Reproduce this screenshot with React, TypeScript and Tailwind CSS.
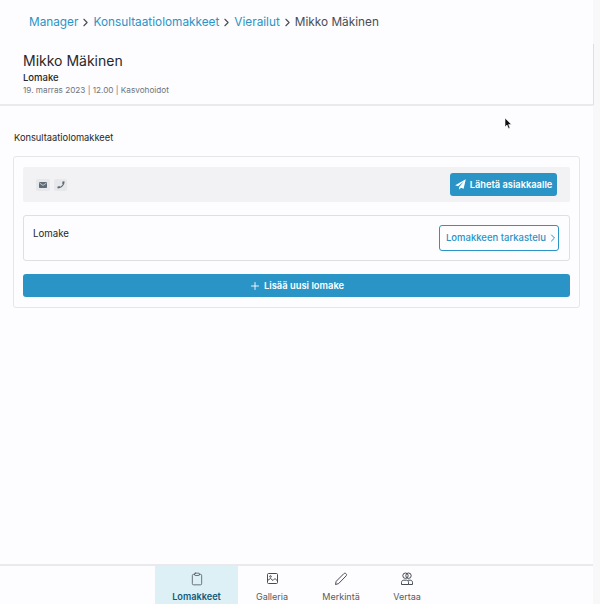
import { ChevronRight, Plus, Clipboard } from "lucide-react";

function Crumb({ children, last }: { children: string; last?: boolean }) {
  return (
    <>
      <span className={last ? "text-[#474d55]" : "text-[#2a94c6]"}>{children}</span>
      {!last && <ChevronRight className="w-[13px] h-[13px] mx-[1px] text-[#474d55]" strokeWidth={2} />}
    </>
  );
}

function Tab({ label, active, icon, w }: { label: string; active?: boolean; icon: React.ReactNode; w: string }) {
  return (
    <div className={`${w} h-full flex flex-col items-center text-[#474d55] ${active ? "bg-[#ddf0f5]" : ""}`}>
      <div className="h-[15px] mt-[5px] flex items-center">{icon}</div>
      <span className={active ? "mt-[5px] text-[9.2px] leading-[12px] font-semibold text-[#155a78]" : "mt-[5px] text-[9px] leading-[12px] text-[#555b63]"}>{label}</span>
    </div>
  );
}

export default function App() {
  return (
    <div className="relative w-[600px] h-[604px] overflow-hidden bg-[#fdfcfe] flex flex-col font-['Inter',sans-serif] text-[#25282c]">
      <div className="absolute right-0 top-0 bottom-0 w-[7px] bg-[#f8f8f9]" />
      <div className="absolute left-[593px] top-[44px] h-[61px] w-px bg-[#dfdfe2]" />

      <nav className="h-[44px] pl-[29px] pt-[1px] flex items-center text-[11.8px] leading-none">
        <Crumb>Manager</Crumb>
        <Crumb>Konsultaatiolomakkeet</Crumb>
        <Crumb>Vierailut</Crumb>
        <Crumb last>Mikko Mäkinen</Crumb>
      </nav>

      <header className="h-[62px] w-[593px] border-b-2 border-[#eaeaec] pl-[23px] pt-[7px]">
        <h1 className="text-[14px] leading-[20px] font-normal">Mikko Mäkinen</h1>
        <p className="mt-[1px] text-[9.5px] leading-[12px] font-medium">Lomake</p>
        <p className="text-[8.2px] leading-[13px] text-[#6f747b]">19. marras 2023 | 12.00 | Kasvohoidot</p>
      </header>

      <main className="pl-[13px] w-[594px] pr-[14px]">
        <h2 className="mt-[24px] pl-[1px] text-[9.3px] leading-[16px] font-normal">Konsultaatiolomakkeet</h2>
        <section className="mt-[10px] h-[152px] border border-[#e6e6e9] rounded-[3px] px-[9px] pt-[10px]">
          <div className="h-[35px] bg-[#f2f2f4] rounded-[2px] pl-[13px] pr-[13px] flex items-center justify-between">
            <div className="flex gap-[4px]">
              <span className="w-[14px] h-[12px] rounded-[2px] bg-[#e7e8ea] flex items-center justify-center">
                <svg width="8" height="6" viewBox="0 0 8 6">
                  <rect width="8" height="6" rx="0.8" fill="#5e6c78" />
                  <path d="M0.5 1L4 3.4L7.5 1" fill="none" stroke="#e7e8ea" strokeWidth="0.7" />
                </svg>
              </span>
              <span className="w-[13px] h-[12px] rounded-[2px] bg-[#e7e8ea] flex items-center justify-center">
                <svg width="8" height="8" viewBox="0 0 8 8">
                  <path d="M7.6 0.6L5.8 0.2L5 2.2L5.9 2.9C5.4 4 4.3 5.1 3 5.8L2.3 4.9L0.3 5.7L0.7 7.5C4.4 7.6 7.6 4.4 7.6 0.6Z" fill="#5e6c78" />
                </svg>
              </span>
            </div>
            <button className="w-[107px] h-[23px] bg-[#2a94c6] rounded-[3px] flex items-center justify-center gap-[4px] text-white text-[9.3px] font-semibold whitespace-nowrap">
              <svg width="11" height="11" viewBox="0 0 11 11">
                <path d="M10.8 0.2L0.2 6.2L3 7.3L8.8 2.4L4.2 7.9V10.8L5.9 8.7L8.6 9.8Z" fill="#fff" />
              </svg>
              Lähetä asiakkaalle
            </button>
          </div>
          <div className="mt-[13px] h-[46px] border border-[#dfdfe3] rounded-[3px] pl-[9px] pr-[10px] flex justify-between">
            <span className="mt-[11px] text-[9.7px] leading-[14px] font-normal">Lomake</span>
            <button className="mt-[9px] w-[120px] h-[26px] border border-[#2a94c6] rounded-[3px] pl-[6px] flex items-center gap-[1px] text-[#2a94c6] text-[9.5px] font-medium whitespace-nowrap">
              <span>Lomakkeen tarkastelu</span>
              <ChevronRight className="w-[12px] h-[12px] shrink-0" strokeWidth={2} />
            </button>
          </div>
          <button className="mt-[13px] w-full h-[23px] pt-[1px] bg-[#2a94c6] rounded-[3px] flex items-center justify-center gap-[3px] text-white text-[9.4px] font-semibold">
            <Plus className="w-[12px] h-[12px]" strokeWidth={1.8} />
            Lisää uusi lomake
          </button>
        </section>
      </main>

      <footer className="mt-auto h-[40px] border-t-2 border-[#eaeaec] pl-[155px] flex">
        <Tab w="w-[83px]" active label="Lomakkeet" icon={<Clipboard className="w-[14px] h-[14px]" strokeWidth={1.3} />} />
        <Tab w="w-[68px]" label="Galleria" icon={
          <svg width="13" height="13" viewBox="0 0 13 13" fill="none" stroke="currentColor" strokeWidth="1">
            <rect x="1.5" y="1.5" width="10" height="10" rx="1" />
            <circle cx="4.5" cy="4.5" r="0.8" />
            <path d="M1.5 8.5L4.5 6.5L7 8.5L9 6.5L11.5 9" />
          </svg>
        } />
        <Tab w="w-[70px]" label="Merkintä" icon={
          <svg width="14" height="14" viewBox="0 0 14 14" fill="none" stroke="currentColor" strokeWidth="1">
            <path d="M1.5 12.5L2.2 9.3L9.8 1.7C10.4 1.1 11.4 1.1 12 1.7C12.7 2.4 12.7 3.3 12.1 3.9L4.6 11.6Z" />
          </svg>
        } />
        <Tab w="w-[62px]" label="Vertaa" icon={
          <svg width="14" height="14" viewBox="0 0 14 14" fill="none" stroke="currentColor" strokeWidth="1">
            <circle cx="5.5" cy="3.7" r="2.7" />
            <circle cx="8.5" cy="3.7" r="2.7" />
            <path d="M1.5 12.5V10.3C1.5 9.1 2.5 8.2 3.7 8.2H6.5C7.5 8.2 8.5 9.1 8.5 10.3V12.5Z" />
            <path d="M8 8.2H10.3C11.5 8.2 12.5 9.1 12.5 10.3V12.5H8.5" />
          </svg>
        } />
      </footer>

      <svg className="absolute left-[504px] top-[117px]" width="9" height="13" viewBox="0 0 9 13">
        <path d="M1 1v9l2-2 1.5 3.5 1.5-.6L4.6 7.6H7.5z" fill="#111" stroke="#fff" strokeWidth="0.6" />
      </svg>
    </div>
  );
}
